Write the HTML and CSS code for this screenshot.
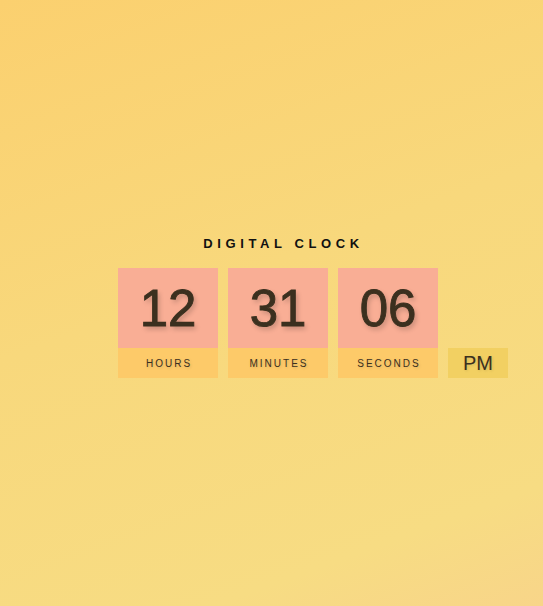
FILE: index.html
```html
<!DOCTYPE html>
<html lang="en">
<head>
<meta charset="utf-8">
<title>Digital Clock</title>
<link rel="stylesheet" href="styles.css">
</head>
<body>
<main class="page">
  <section class="clock">
    <h1 class="title">DIGITAL CLOCK</h1>
    <div class="row">
      <div class="unit">
        <div class="num">12</div>
        <div class="label">HOURS</div>
      </div>
      <div class="unit">
        <div class="num">31</div>
        <div class="label">MINUTES</div>
      </div>
      <div class="unit">
        <div class="num">06</div>
        <div class="label">SECONDS</div>
      </div>
      <div class="ampm">PM</div>
    </div>
  </section>
</main>
</body>
</html>
```

FILE: styles.css
```css
html, body {
  margin: 0;
  padding: 0;
}

body {
  font-family: "Liberation Sans", Arial, Helvetica, sans-serif;
}

.page {
  box-sizing: border-box;
  min-height: 606px;
  display: flex;
  align-items: center;
  justify-content: center;
  padding: 8px 0 0 83px;
  background: linear-gradient(160deg, #fbd06f 0%, #f8d87c 45%, #f7dc83 85%, #f8d589 100%);
}

.clock {
  display: flex;
  flex-direction: column;
  align-items: flex-start;
}

.title {
  width: 330px;
  margin: 0 0 16px;
  padding-left: 1px;
  box-sizing: border-box;
  text-align: center;
  font-size: 13px;
  line-height: 16px;
  font-weight: 700;
  letter-spacing: 4.6px;
  color: #111;
}

.row {
  display: flex;
  align-items: flex-end;
  gap: 10px;
}

.unit {
  width: 100px;
  display: flex;
  flex-direction: column;
}

.num {
  height: 80px;
  display: flex;
  align-items: center;
  justify-content: center;
  background: #f9ae95;
  color: #3b301f;
  font-size: 51px;
  line-height: 1;
  -webkit-text-stroke: 0.9px #3b301f;
  text-shadow: 2px 3px 5px rgba(0, 0, 0, 0.22);
}

.label {
  height: 30px;
  display: flex;
  align-items: center;
  justify-content: center;
  background: #fdca69;
  color: #3b301f;
  font-size: 10px;
  letter-spacing: 2px;
  padding-left: 2px;
  text-shadow: 1px 1px 3px rgba(0, 0, 0, 0.15);
}

.ampm {
  width: 60px;
  height: 30px;
  display: flex;
  align-items: center;
  justify-content: center;
  background: #f2d062;
  color: #3b301f;
  font-size: 20px;
  text-shadow: 1px 1px 3px rgba(0, 0, 0, 0.12);
}
```
